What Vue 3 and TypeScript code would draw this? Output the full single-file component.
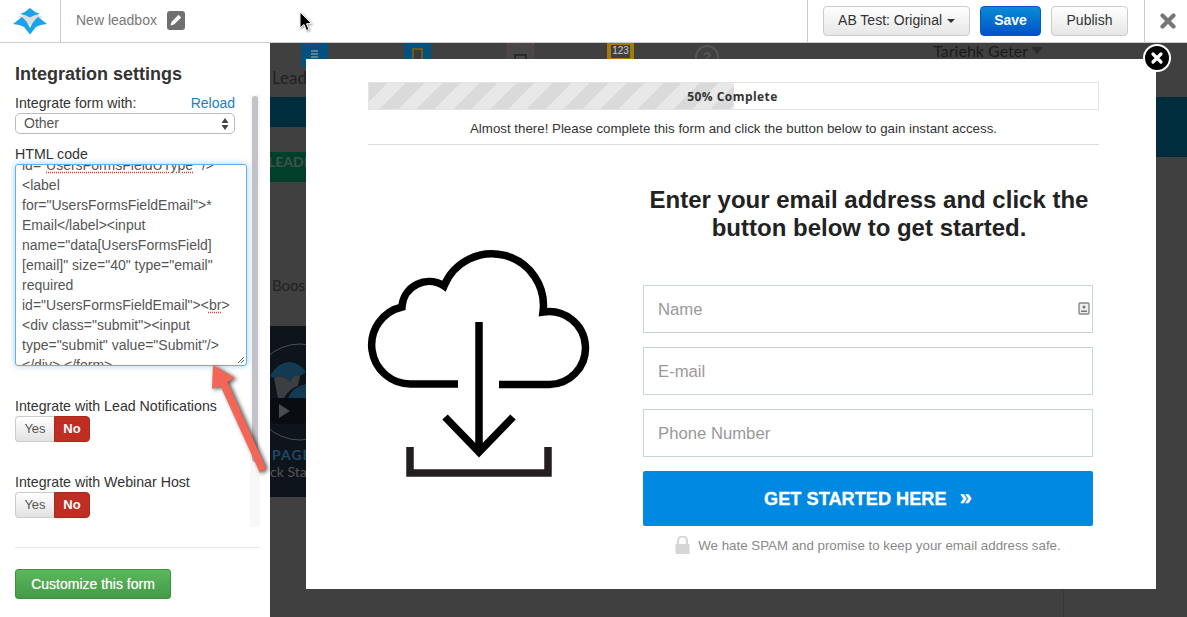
<template>
  <div class="app">
    <header class="topbar">
      <div class="logo-cell">
        <svg width="60" height="42" viewBox="0 0 60 42">
          <path d="M17.500 17 L28 13 L30 18 L32 13 L43 17 L38 21 L30 25 L22 21 Z" fill="#dedede" />
          <path d="M20 14 Q26 12 30 8 Q34 12 40 14 Q34 14.500 30 17.500 Q26 14.500 20 14 Z" fill="#1aa3ea" />
          <path d="M13 24 Q18 20 22 17 Q27 21 30 28 Q33 21 38 17 Q42 20 47 24 Q40 24.500 36 27 L30 34.500 L24 27 Q20 24.500 13 24 Z" fill="#1aa3ea" />
        </svg>
      </div>
      <div class="title-cell">
        <span class="box-name">New leadbox</span>
        <span class="edit-icon">
          <svg width="12" height="12" viewBox="0 0 12 12"><path d="M8.600 0.800 L11.200 3.400 L4 10.600 L0.600 11.400 L1.400 8 Z" fill="#fff" /></svg>
        </span>
      </div>
      <svg class="cursor" width="16" height="22" viewBox="0 0 16 22">
        <path d="M2 1 V17 L6 13.500 L8.500 19.500 L11 18.500 L8.500 12.800 L13.500 12.500 Z" fill="#000" stroke="#fff" stroke-width="1" />
      </svg>
      <div class="actions">
        <button class="btn btn-default ab-btn">AB Test: Original <i class="caret"></i></button>
        <button class="btn btn-save">Save</button>
        <button class="btn btn-default publish-btn">Publish</button>
      </div>
      <div class="close-cell">
        <svg width="16" height="16" viewBox="0 0 16 16"><path d="M2.500 2.500 L13.500 13.500 M13.500 2.500 L2.500 13.500" stroke="#777" stroke-width="4.200" stroke-linecap="round" /></svg>
      </div>
    </header>

    <div class="stage">
      <aside class="sidebar">
        <h2 class="side-title">Integration settings</h2>
        <div class="scroll-pane">
          <div class="side-form">
            <div class="label-row">
              <span>Integrate form with:</span>
              <a class="reload">Reload</a>
            </div>
            <div class="select-wrap">
              <select class="select"><option>Other</option></select>
              <svg class="select-arrows" width="8" height="14" viewBox="0 0 8 14"><path d="M4 1 L7.500 6 H0.500 Z M4 13 L0.500 8 H7.500 Z" fill="#444" /></svg>
            </div>
            <div class="label-line">HTML code</div>
            <div class="code-box">
              <div class="code-inner">
                <div v-for="(line, i) in codeLines" :key="i" class="code-line"><span v-for="(seg, j) in line" :key="j" :class="{ misspelt: seg.bad }">{{ seg.text }}</span></div>
              </div>
              <svg class="grip" width="8" height="8" viewBox="0 0 8 8"><path d="M1 7 L7 1 M4 7 L7 4" stroke="#666" stroke-width="1" /></svg>
            </div>
            <div v-for="group in toggles" :key="group" class="toggle-group">
              <div class="label-line">{{ group }}</div>
              <div class="toggle">
                <span class="toggle-yes">Yes</span>
                <span class="toggle-no">No</span>
              </div>
            </div>
          </div>
          <div class="track"><div class="thumb"></div></div>
        </div>
        <hr class="side-rule" />
        <button class="customize">Customize this form</button>
      </aside>

      <main class="canvas">
        <div class="page-nav">
          <div class="nav-icon icon-blue"><span></span><span></span><span></span></div>
          <div class="nav-icon icon-blue icon-doc"><b></b></div>
          <div class="nav-icon icon-mail"><b></b></div>
          <div class="nav-icon icon-amber"><span>123</span></div>
          <div class="nav-help">?</div>
          <div class="nav-user">Tariehk Geter<i></i></div>
        </div>
        <div class="page-body">
          <div class="strip-left">
            <div class="page-title">Leadb</div>
            <div class="teal-short"></div>
            <div class="green-btn">LEADE</div>
            <div class="boost">Boost</div>
            <div class="video">
              <svg width="36" height="118" viewBox="0 0 36 118">
                <circle cx="30" cy="66" r="48" fill="none" stroke="#4a5058" stroke-width="1" />
                <path d="M0 50 Q8 36 20 36 Q30 37 36 46 L30 50 Q24 47 20 56 Q14 48 4 52 Z" fill="#143a52" />
                <path d="M4 52 Q14 48 20 56 Q24 47 30 50 L28 60 Q20 62 14 72 H8 Z" fill="#3c3f42" />
                <path d="M18 72 Q24 60 36 58 V72 Z" fill="#143a52" />
                <rect x="0" y="72" width="36" height="26" rx="5" fill="#090c10" />
                <path d="M9 78 L20 85 L9 92 Z" fill="#484c50" />
              </svg>
              <div class="video-brand">PAGE</div>
              <div class="video-caption">ck Start</div>
            </div>
          </div>
          <div class="strip-right"><div class="teal-tall"></div></div>
        </div>
        <div class="seam"></div>

        <section class="modal">
          <button class="modal-close">
            <svg width="14" height="14" viewBox="0 0 14 14"><path d="M3 3 L11 11 M11 3 L3 11" stroke="#fff" stroke-width="3.200" stroke-linecap="round" /></svg>
          </button>
          <div class="modal-head">
            <div class="progress">
              <div class="progress-fill" :style="{ width: progress + '%' }"></div>
              <span class="progress-text">{{ progress }}% Complete</span>
            </div>
            <p class="almost">Almost there! Please complete this form and click the button below to gain instant access.</p>
          </div>
          <div class="modal-body">
            <svg class="cloud" width="260" height="260" viewBox="0 0 260 260" fill="none">
              <path d="M108 154 H62 A39 39 0 0 1 52 77 A27 27 0 0 1 94 56 A51.600 51.600 0 0 1 193 82 A36.500 36.500 0 1 1 198 154.500 H149" stroke="#000" stroke-width="7.500" />
              <path d="M129 92 V222 M95 187 L129 222 L163 187" stroke="#000" stroke-width="7.500" />
              <path d="M60 217 V243 H198 V217" stroke="#231f20" stroke-width="7.500" />
            </svg>
            <div class="form-col">
              <h1 class="headline">Enter your email address and click the button below to get started.</h1>
              <div v-for="field in fields" :key="field" class="field">
                <input class="field-input" type="text" :placeholder="field" />
                <svg v-if="field === 'Name'" class="contact-icon" width="12" height="13" viewBox="0 0 12 13">
                  <rect x="1" y="1" width="10" height="11" rx="1" fill="#eee" stroke="#888" stroke-width="1.400" />
                  <circle cx="6" cy="5" r="1.500" fill="#777" />
                  <path d="M3 10 V8.500 H9 V10 Z" fill="#777" />
                </svg>
              </div>
              <button class="cta">GET STARTED HERE <span class="cta-arrows">»</span></button>
              <div class="spam">
                <svg width="15" height="18" viewBox="0 0 15 18"><path d="M3 8 V5 A4.500 4.500 0 0 1 12 5 V8" fill="none" stroke="#d6d6d6" stroke-width="2.200" /><rect x="0.500" y="8" width="14" height="10" fill="#d6d6d6" /></svg>
                <span>We hate SPAM and promise to keep your email address safe.</span>
              </div>
            </div>
          </div>
        </section>
      </main>
    </div>

    <svg class="pointer" width="70" height="120" viewBox="205 360 70 120">
      <path d="M213 365 L235 378 L227.500 382 L266 468 L260 473 L220.500 386 L212 389 Z" fill="#f26557" />
    </svg>
  </div>
</template>

<script setup lang="ts">
interface CodeSeg {
  text: string;
  bad?: boolean;
}

const progress = 50;

const codeLines: CodeSeg[][] = [
  [{ text: 'id="' }, { text: 'UsersFormsFieldUType', bad: true }, { text: '" />' }],
  [{ text: '<label' }],
  [{ text: 'for="UsersFormsFieldEmail">*' }],
  [{ text: 'Email</label><input' }],
  [{ text: 'name="data[UsersFormsField]' }],
  [{ text: '[email]" size="40" type="email"' }],
  [{ text: 'required' }],
  [{ text: 'id="UsersFormsFieldEmail"><' }, { text: 'br', bad: true }, { text: '>' }],
  [{ text: '<div class="submit"><input' }],
  [{ text: 'type="submit" value="Submit"/>' }],
  [{ text: '</div> </form>' }],
];

const toggles = ['Integrate with Lead Notifications', 'Integrate with Webinar Host'];
const fields = ['Name', 'E-mail', 'Phone Number'];
</script>

<style>
html, body { margin: 0; padding: 0; background: #404040; }
</style>

<style scoped>
.app {
  position: relative;
  width: 1187px;
  height: 617px;
  overflow: hidden;
  display: flex;
  flex-direction: column;
  font-family: "Liberation Sans", Arial, sans-serif;
  font-size: 14px;
  color: #333;
}

/* top bar */
.topbar {
  position: relative;
  z-index: 3;
  flex: 0 0 43px;
  box-sizing: border-box;
  display: flex;
  align-items: stretch;
  background: #fff;
  border-bottom: 1px solid #ccc;
}
.logo-cell { width: 60px; border-right: 1px solid #ccc; }
.logo-cell svg { display: block; }
.title-cell {
  display: flex;
  align-items: center;
  gap: 10px;
  padding-left: 15px;
  padding-bottom: 2px;
  flex: 1;
}
.box-name { color: #777; font-size: 14px; }
.edit-icon {
  width: 18px;
  height: 19px;
  border-radius: 3px;
  background: #6f6f6f;
  display: flex;
  align-items: center;
  justify-content: center;
}
.cursor { position: absolute; left: 298px; top: 11px; filter: drop-shadow(1px 1px 1px rgba(0,0,0,.4)); }
.actions {
  display: flex;
  align-items: center;
  gap: 10px;
  width: 337px;
  box-sizing: border-box;
  padding-left: 15px;
  border-left: 1px solid #ccc;
}
.btn {
  height: 30px;
  border-radius: 4px;
  font: 14px "Liberation Sans", Arial, sans-serif;
  padding: 0 0 2px;
  cursor: pointer;
}
.btn-default {
  color: #333;
  border: 1px solid #ccc;
  background: linear-gradient(#fff, #e6e6e6);
}
.ab-btn { width: 147px; }
.publish-btn { width: 77px; }
.btn-save {
  width: 61px;
  color: #fff;
  font-weight: bold;
  border: 1px solid #0058c4;
  background: linear-gradient(#0a8bd6, #0052c6);
}
.caret {
  display: inline-block;
  margin-left: 1px;
  vertical-align: middle;
  border-top: 4px solid #333;
  border-left: 4px solid transparent;
  border-right: 4px solid transparent;
}
.close-cell {
  width: 43px;
  box-sizing: border-box;
  padding-left: 3px;
  border-left: 1px solid #ccc;
  display: flex;
  align-items: center;
  justify-content: center;
}

.stage { flex: 1; display: flex; min-height: 0; }

/* sidebar */
.sidebar {
  flex: 0 0 270px;
  box-sizing: border-box;
  background: #fff;
  padding: 20px 10px 0 15px;
  position: relative;
  z-index: 2;
}
.side-title {
  margin: 0;
  font-size: 18px;
  line-height: 22px;
  font-weight: bold;
  color: #333;
}
.scroll-pane { display: flex; justify-content: space-between; margin-top: 8px; height: 434px; }
.side-form { width: 220px; font-size: 14.2px; }
.label-row { display: flex; justify-content: space-between; line-height: 20px; }
.label-line { line-height: 20px; white-space: nowrap; }
.reload { color: #1a7fc9; font-size: 14px; }
.select-wrap { position: relative; margin-bottom: 10px; }
.select {
  display: block;
  width: 100%;
  height: 21px;
  appearance: none;
  border: 1px solid #bbb;
  border-radius: 5px;
  background: #fff;
  color: #555;
  font: 14px "Liberation Sans", Arial, sans-serif;
  padding: 0 0 2px 8px;
}
.select-arrows { position: absolute; right: 6px; top: 4px; }
.code-box {
  position: relative;
  width: 232px;
  height: 202px;
  box-sizing: border-box;
  border: 1px solid #66afe9;
  border-radius: 3px;
  box-shadow: 0 0 6px rgba(102, 175, 233, .6);
  background: #fff;
  overflow: hidden;
}
.code-inner { margin-top: -10px; padding-left: 6px; }
.code-line { font-size: 14px; line-height: 20px; color: #555; white-space: pre; }
.misspelt { text-decoration: underline dotted #e8392b; text-underline-offset: 2px; }
.grip { position: absolute; right: 1px; bottom: 1px; background: #fff; }
.toggle-group { margin-top: 30px; }
.toggle {
  display: flex;
  width: 75px;
  height: 26px;
  font-size: 13px;
  line-height: 24px;
}
.toggle-yes {
  width: 39px;
  box-sizing: border-box;
  text-align: center;
  color: #555;
  border: 1px solid #ccc;
  border-right: 0;
  border-radius: 4px 0 0 4px;
  background: linear-gradient(#fff, #e2e2e2);
}
.toggle-no {
  width: 36px;
  box-sizing: border-box;
  text-align: center;
  color: #fff;
  font-weight: bold;
  border: 1px solid #a82a1e;
  border-radius: 0 4px 4px 0;
  background: #bf2e22;
}
.track { width: 10px; margin-top: 2px; background: #f8f8f9; }
.thumb { width: 6px; height: 366px; margin: 1px 2px; border-radius: 3px; background: #c2c2c7; }
.side-rule { margin: 20px 0 21px; border: 0; border-top: 1px solid #e8e8e8; }
.customize {
  display: block;
  width: 156px;
  height: 30px;
  padding: 0;
  border: 1px solid #3e8f3e;
  border-radius: 3px;
  color: #fff;
  font: 14px "Liberation Sans", Arial, sans-serif;
  text-shadow: 0 0 1px rgba(255, 255, 255, .6);
  background: linear-gradient(#5cb85c, #429a46);
}

/* what is behind the modal */
.canvas { position: relative; flex: 1; background: #404040; min-width: 0; }
.page-nav { position: relative; height: 16px; display: flex; align-items: flex-start; padding-left: 31px; }
.nav-icon { width: 27px; height: 24px; flex: none; box-sizing: border-box; }
.nav-icon + .nav-icon { margin-left: 76px; }
.icon-blue { background: #04507e; border-radius: 0 0 3px 3px; padding: 7px 10px 0; }
.icon-blue span { display: block; height: 2px; margin-bottom: 1px; background: #5f7f98; }
.icon-doc b { display: block; height: 14px; margin: -2px -2px 0; background: #3c3c3c; border: 2px solid #6a5c1e; }
.icon-mail {
  border: 1px dashed #6a4444;
  border-bottom: 0;
  background: #474747;
  padding: 10px 6px 0;
}
.icon-mail b { display: block; height: 10px; border: 2px solid #2a2a2a; }
.icon-amber { background: #a27a10; padding: 2px 4px 0; margin-left: 73px !important; font-size: 10px; line-height: 12px; color: #cfcfcf; text-align: center; }
.icon-amber span { display: block; background: #3f3f3f; height: 13px; }
.nav-help {
  margin-left: 61px;
  width: 24px;
  height: 24px;
  box-sizing: border-box;
  border: 2px solid #555;
  border-radius: 50%;
  color: #555;
  font-weight: bold;
  font-size: 14px;
  line-height: 20px;
  text-align: center;
  margin-top: 2px;
}
.nav-user {
  margin-left: auto;
  margin-right: 144px;
  font-family: Lato, sans-serif;
  font-size: 16px;
  line-height: 16px;
  color: #1b1b1b;
  white-space: nowrap;
}
.nav-user i {
  display: inline-block;
  margin-left: 3px;
  vertical-align: 3px;
  border-top: 7px solid #2c2c2c;
  border-left: 6px solid transparent;
  border-right: 6px solid transparent;
}
.page-body { display: flex; justify-content: space-between; }
.strip-left { width: 36px; overflow: hidden; }
.page-title {
  margin: 8px 0 0 2px;
  font-family: Lato, sans-serif;
  font-size: 17px;
  line-height: 22px;
  color: #222;
}
.teal-short { margin-top: 8px; height: 30px; background: #002d3d; }
.green-btn {
  margin-top: 25px;
  height: 30px;
  width: 36px;
  background: #00402a;
  color: #44504a;
  font: bold 14px/20px Lato, sans-serif;
  text-indent: -2px;
  white-space: nowrap;
}
.boost {
  margin: 93px 0 0 2px;
  font-family: Lato, sans-serif;
  font-size: 15px;
  line-height: 20px;
  color: #222;
  white-space: nowrap;
}
.video { margin-top: 31px; height: 171px; background: #0e141b; white-space: nowrap; }
.video svg { display: block; }
.video-brand { margin: 3px 0 0 2px; font: bold 14px/16px Lato, sans-serif; letter-spacing: 1px; color: #1d4a66; }
.video-caption { font: 14px/17px Lato, sans-serif; color: #555; }
.strip-right { width: 31px; }
.teal-tall { margin-top: 38px; height: 60px; background: #002d3d; }
.seam { position: absolute; left: 793px; bottom: 0; width: 1px; height: 28px; background: #393939; }

/* modal */
.modal {
  position: absolute;
  left: 36px;
  top: 16px;
  width: 850px;
  height: 530px;
  background: #fff;
  box-sizing: border-box;
  padding-top: 23px;
}
.modal-close {
  position: absolute;
  right: -15px;
  top: -15px;
  width: 28px;
  height: 28px;
  padding: 0;
  box-sizing: border-box;
  border: 2px solid #fff;
  border-radius: 50%;
  background: #000;
  display: flex;
  align-items: center;
  justify-content: center;
}
.modal-head { margin: 0 57px 0 62px; border-bottom: 1px solid #ddd; }
.progress {
  position: relative;
  height: 28px;
  box-sizing: border-box;
  border: 1px solid #e4e4e4;
  background: #fff;
  display: flex;
  align-items: center;
  justify-content: center;
}
.progress-fill {
  position: absolute;
  left: 0;
  top: 0;
  bottom: 0;
  background: repeating-linear-gradient(135deg, #dadada 0 13px, #e8e8e8 13px 26px);
}
.progress-text {
  position: relative;
  margin-right: 2px;
  font: bold 12px "Open Sans", sans-serif;
  letter-spacing: .45px;
  color: #333;
}
.almost { margin: 0; height: 34px; line-height: 37px; text-align: center; font-size: 13.3px; color: #333; white-space: nowrap; }
.modal-body { display: flex; padding: 41px 0 0 44px; }
.cloud { flex: none; margin-top: 44px; }
.form-col { width: 450px; margin-left: 33px; }
.headline {
  margin: 0 -11px 43px -9px;
  font-size: 24px;
  line-height: 28px;
  font-weight: bold;
  text-align: center;
  color: #222;
}
.field { position: relative; margin-bottom: 14px; }
.field-input {
  display: block;
  width: 100%;
  height: 48px;
  box-sizing: border-box;
  border: 1px solid #c6d6df;
  padding: 2px 14px 0;
  font: 16.7px "Liberation Sans", Arial, sans-serif;
  outline: none;
}
.field-input::placeholder { color: #999; opacity: 1; }
.contact-icon { position: absolute; right: 3px; top: 17px; }
.cta {
  display: block;
  width: 100%;
  height: 55px;
  padding: 0 0 2px;
  border: 0;
  border-radius: 2px;
  background: #0089e0;
  color: #fff;
  font: bold 18.2px "Liberation Sans", Arial, sans-serif;
  -webkit-text-stroke: .3px #fff;
}
.cta-arrows { margin-left: 8px; font-size: 22px; }
.spam {
  display: flex;
  align-items: center;
  justify-content: center;
  gap: 8px;
  margin-top: 10px;
  font-size: 13.3px;
  color: #888;
  white-space: nowrap;
}

.pointer {
  position: absolute;
  left: 205px;
  top: 360px;
  z-index: 4;
  filter: drop-shadow(2px 1px 2px rgba(0, 0, 0, .7));
}
</style>
